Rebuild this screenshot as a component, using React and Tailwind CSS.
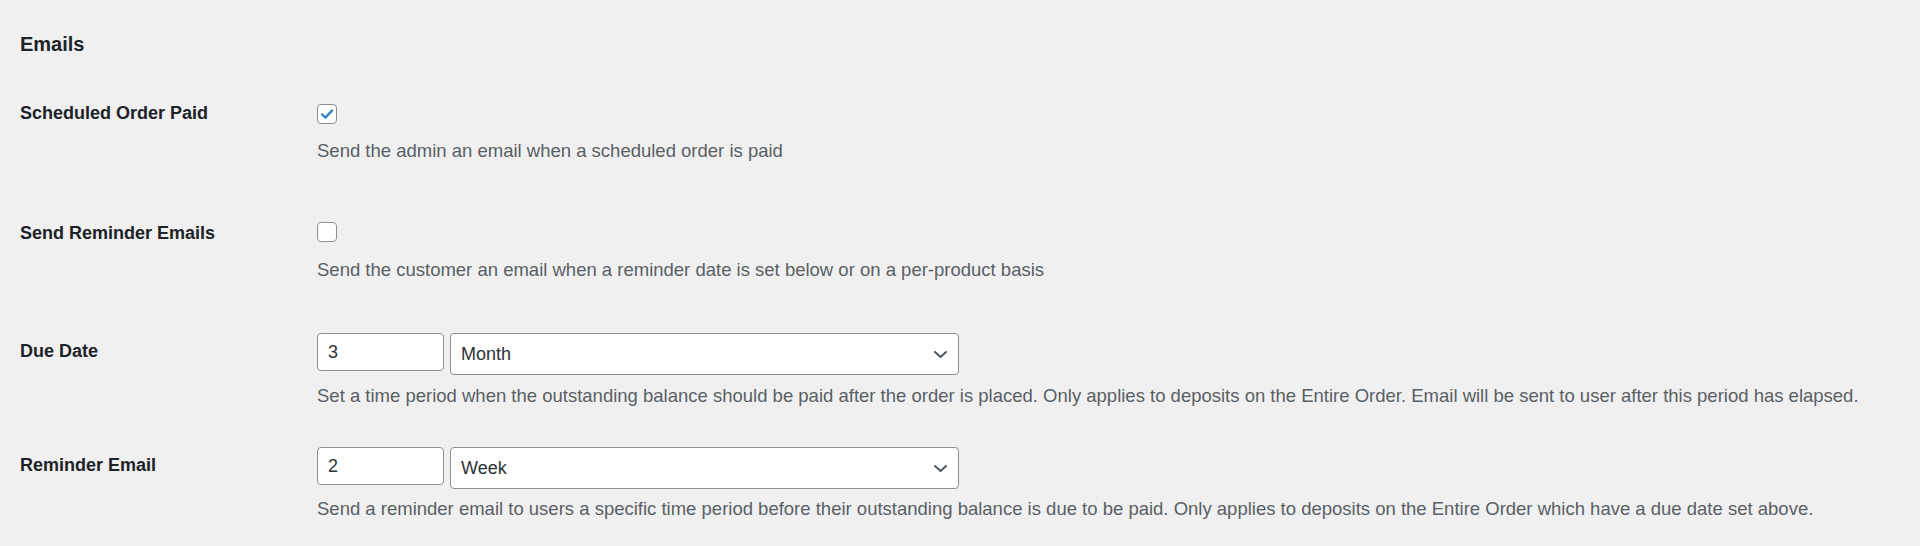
import React from 'react'

const FONT = { fontFamily: '"Liberation Sans", Arial, sans-serif' }

function Checkbox({ checked }) {
  return (
    <div className="w-[20px] h-[20px] rounded-[4px] border border-[#8c8f94] bg-white flex items-center justify-center">
      {checked &&
      <svg width="16" height="16" viewBox="0 0 16 16" fill="none">
        <path d="M3 8.4 L6.4 11.6 L13 4.6" stroke="#3582c4" strokeWidth="2.4" strokeLinecap="round" strokeLinejoin="round" />
      </svg>
      }
    </div>
  )
}

function NumberBox({ value }) {
  return (
    <div className="w-[127px] h-[38px] rounded-[4px] border border-[#8c8f94] bg-white pl-[10px] flex items-center text-[18px] text-[#2c3338]">
      {value}
    </div>
  )
}

function SelectBox({ value }) {
  return (
    <div className="w-[509px] h-[42px] rounded-[4px] border border-[#8c8f94] bg-white pl-[10px] pr-[10px] flex items-center justify-between text-[18px] text-[#2c3338]">
      <span>{value}</span>
      <svg width="15" height="9" viewBox="0 0 15 9" fill="none">
        <path d="M2 2 L7.5 7 L13 2" stroke="#50575e" strokeWidth="2" strokeLinecap="round" strokeLinejoin="round" />
      </svg>
    </div>
  )
}

function Description({ children, className }) {
  return (
    <p className={"text-[18.5px] leading-[26px] text-[#5a5f64] whitespace-nowrap " + className}>
      {children}
    </p>
  )
}

function Label({ children, className }) {
  return (
    <div className={"w-[297px] shrink-0 text-[18px] leading-[26px] font-bold text-[#1d2327] " + className}>
      {children}
    </div>
  )
}

export default function App() {
  return (
    <div className="w-[1920px] h-[546px] bg-[#f0f0f1] px-[20px] pt-[30px] overflow-hidden" style={FONT}>
      <h2 className="text-[20px] leading-[28px] font-bold text-[#1d2327]">Emails</h2>

      <div className="flex mt-[42px]">
        <Label>Scheduled Order Paid</Label>
        <div className="pt-[4px]">
          <Checkbox checked />
          <Description className="mt-[14px]">Send the admin an email when a scheduled order is paid</Description>
        </div>
      </div>

      <div className="flex mt-[56px]">
        <Label>Send Reminder Emails</Label>
        <div className="pt-[2px]">
          <Checkbox />
          <Description className="mt-[15px]">
            Send the customer an email when a reminder date is set below or on a per-product basis
          </Description>
        </div>
      </div>

      <div className="flex mt-[50px]">
        <Label className="pt-[5px]">Due Date</Label>
        <div>
          <div className="flex items-start gap-[6px]">
            <NumberBox value="3" />
            <SelectBox value="Month" />
          </div>
          <Description className="mt-[8px]">
            Set a time period when the outstanding balance should be paid after the order is placed. Only applies to deposits on the Entire Order. Email will be sent to user after this period has elapsed.
          </Description>
        </div>
      </div>

      <div className="flex mt-[38px]">
        <Label className="pt-[5px]">Reminder Email</Label>
        <div>
          <div className="flex items-start gap-[6px]">
            <NumberBox value="2" />
            <SelectBox value="Week" />
          </div>
          <Description className="mt-[7px]">
            Send a reminder email to users a specific time period before their outstanding balance is due to be paid. Only applies to deposits on the Entire Order which have a due date set above.
          </Description>
        </div>
      </div>
    </div>
  )
}
